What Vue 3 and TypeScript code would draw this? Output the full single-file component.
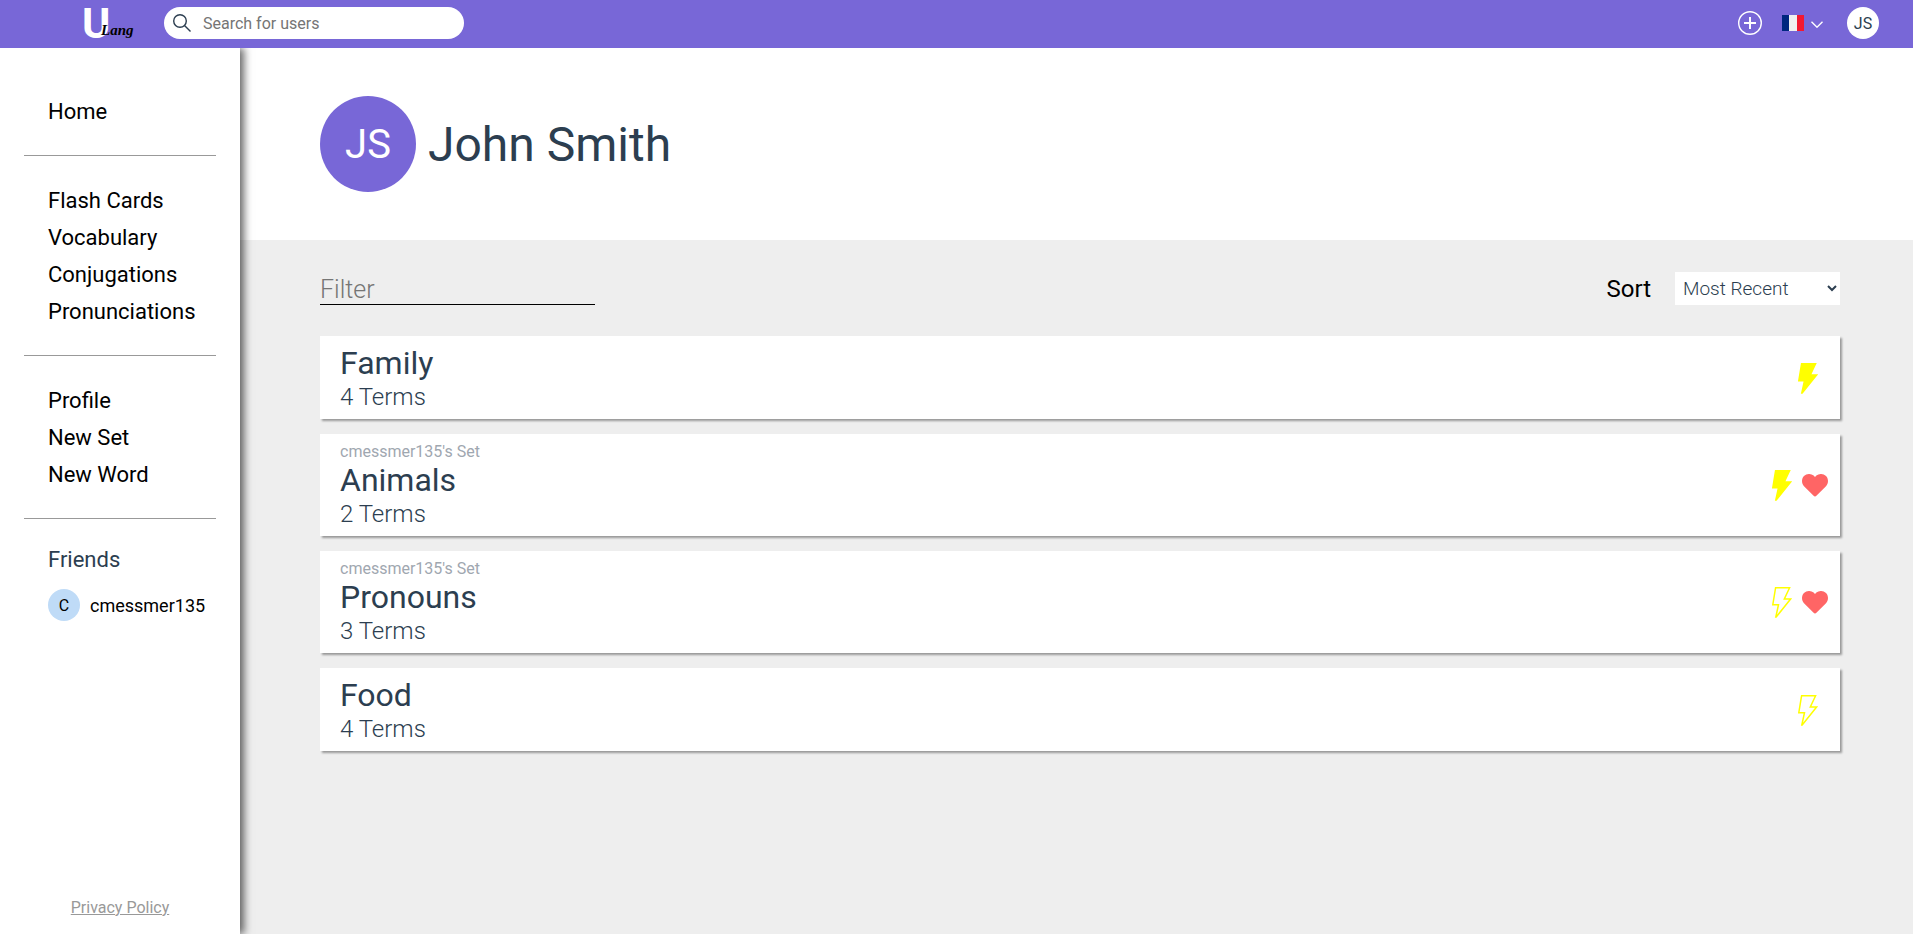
<script setup lang="ts">
import { computed, ref } from 'vue'

interface CardSet {
  id: number
  title: string
  terms: number
  owner?: string
  studied: boolean
  liked: boolean
}

const navGroups: string[][] = [
  ['Home'],
  ['Flash Cards', 'Vocabulary', 'Conjugations', 'Pronunciations'],
  ['Profile', 'New Set', 'New Word'],
]

const sets: CardSet[] = [
  { id: 1, title: 'Family', terms: 4, studied: true, liked: false },
  { id: 2, title: 'Animals', terms: 2, owner: 'cmessmer135', studied: true, liked: true },
  { id: 3, title: 'Pronouns', terms: 3, owner: 'cmessmer135', studied: false, liked: true },
  { id: 4, title: 'Food', terms: 4, studied: false, liked: false },
]

const userSearch = ref('')
const filter = ref('')
const sort = ref('recent')

const shownSets = computed(() => {
  const term = filter.value.trim().toLowerCase()
  const found = sets.filter((s) => s.title.toLowerCase().includes(term))
  return sort.value === 'name' ? found.sort((a, b) => a.title.localeCompare(b.title)) : found
})
</script>

<template>
  <div class="page">
    <header class="topbar">
      <a class="logo" href="#" aria-label="U Lang"><span class="logo-u">U</span><span class="logo-lang">Lang</span></a>
      <form class="search" role="search" @submit.prevent>
        <svg class="search-icon" viewBox="0 0 18 18" aria-hidden="true">
          <circle cx="7" cy="7" r="6.3" />
          <path d="M11.5 11.5L17.5 17.5" />
        </svg>
        <input v-model="userSearch" type="text" placeholder="Search for users" aria-label="Search for users" />
      </form>
      <div class="actions">
        <button class="icon-button" type="button" aria-label="Create">
          <svg class="plus" viewBox="0 0 24 24" aria-hidden="true">
            <circle cx="12" cy="12" r="11.3" />
            <path d="M12 6v12M6 12h12" />
          </svg>
        </button>
        <button class="icon-button language" type="button" aria-label="Language: French">
          <svg class="flag" viewBox="0 0 22 16" aria-hidden="true">
            <rect width="22" height="16" fill="#f0f0f0" />
            <rect width="7" height="16" fill="#00267f" />
            <rect x="15" width="7" height="16" fill="#f31830" />
          </svg>
          <svg class="chevron" viewBox="0 0 12 7" aria-hidden="true"><path d="M.5 .7L6 6.2L11.5 .7" /></svg>
        </button>
        <button class="avatar avatar-user" type="button" aria-label="Account of JS">JS</button>
      </div>
    </header>

    <div class="body">
      <aside class="sidebar">
        <nav aria-label="Main">
          <template v-for="(group, i) in navGroups" :key="i">
            <ul class="nav-group">
              <li v-for="item in group" :key="item"><a href="#">{{ item }}</a></li>
            </ul>
            <hr />
          </template>
        </nav>
        <section class="friends">
          <h2>Friends</h2>
          <a class="friend" href="#"><span class="avatar avatar-friend">C</span><span>cmessmer135</span></a>
        </section>
        <a class="privacy" href="#">Privacy Policy</a>
      </aside>

      <main class="content">
        <section class="profile">
          <div class="avatar-large">JS</div>
          <h1>John Smith</h1>
        </section>

        <section class="sets">
          <div class="controls">
            <input v-model="filter" class="filter" type="text" placeholder="Filter" aria-label="Filter" />
            <div class="sort">
              <label for="sort">Sort</label>
              <select id="sort" v-model="sort">
                <option value="recent">Most Recent</option>
                <option value="name">Name</option>
              </select>
            </div>
          </div>

          <ul class="cards">
            <li v-for="set in shownSets" :key="set.id" class="card">
              <div class="card-text">
                <p v-if="set.owner" class="owner">{{ set.owner }}'s Set</p>
                <h3>{{ set.title }}</h3>
                <p class="terms">{{ set.terms }} Terms</p>
              </div>
              <svg class="bolt" :class="{ filled: set.studied }" viewBox="0 0 20 31" aria-hidden="true">
                <path d="M3.6 .7H17.6L12.3 12H18.6L4.2 30H3.8L6.5 17.7H.8Z" />
              </svg>
              <svg v-if="set.liked" class="heart" viewBox="0 0 26 23" aria-hidden="true">
                <path d="M13 22.5c-.6 0-1-.3-1.4-.7L2 12.2C-.7 9.4-.6 4.7 2 2C4.7-.6 9-.6 11.6 1.6L13 2.9L14.4 1.6C17-.6 21.3-.6 24 2C26.6 4.7 26.7 9.4 24 12.2L14.4 21.8c-.4.4-.8.7-1.4.7Z" />
              </svg>
            </li>
          </ul>
        </section>
      </main>
    </div>
  </div>
</template>

<style>
body {
  margin: 0;
}
</style>

<style scoped>
.page {
  display: flex;
  flex-direction: column;
  min-height: 100vh;
  font-family: Roboto, sans-serif;
  font-size: 16px;
  color: #2c3e50;
}

.page *,
.page {
  box-sizing: border-box;
}

h1,
h2,
h3,
p,
ul {
  margin: 0;
  padding: 0;
  font-weight: 400;
  list-style: none;
}

a {
  color: #000;
  text-decoration: none;
}

input,
select,
button {
  font: inherit;
  color: inherit;
  border: 0;
}

input:focus {
  outline: none;
}

svg {
  display: block;
  flex: none;
}

.topbar {
  position: relative;
  z-index: 2;
  display: flex;
  align-items: center;
  height: 48px;
  padding: 0 34px 2px 82px;
  background: #7867d7;
}

.logo {
  position: relative;
  width: 82px;
  height: 46px;
}

.logo-u {
  display: block;
  font-size: 43px;
  line-height: 46px;
  font-weight: 700;
  color: #fff;
}

.logo-lang {
  position: absolute;
  left: 19px;
  top: 20px;
  font-family: "Liberation Serif", serif;
  font-size: 15px;
  line-height: 20px;
  font-weight: 700;
  font-style: italic;
}

.search {
  display: flex;
  align-items: center;
  width: 300px;
  height: 32px;
  padding: 0 16px 0 9px;
  gap: 12px;
  border-radius: 16px;
  background: #fff;
}

.search input {
  flex: 1;
  min-width: 0;
  padding: 0;
  background: none;
}

.search-icon {
  width: 18px;
  height: 18px;
  fill: none;
  stroke: #2c3e50;
  stroke-width: 1.4;
}

input::placeholder {
  color: #757575;
}

.actions {
  display: flex;
  align-items: center;
  margin-left: auto;
}

.icon-button {
  display: flex;
  align-items: center;
  padding: 0;
  background: none;
  cursor: pointer;
}

.plus {
  width: 24px;
  height: 24px;
  fill: none;
  stroke: #fff;
  stroke-width: 1.4;
}

.plus path {
  stroke-width: 2;
}

.language {
  gap: 7px;
  margin: 0 24px 0 20px;
}

.flag {
  width: 22px;
  height: 16px;
}

.chevron {
  width: 12px;
  height: 7px;
  margin-top: 3px;
  fill: none;
  stroke: #fff;
  stroke-width: 1.4;
}

.avatar {
  display: flex;
  align-items: center;
  justify-content: center;
  width: 32px;
  height: 32px;
  padding: 0;
  border-radius: 50%;
}

.avatar-user {
  background: #fff;
}

.avatar-friend {
  background: #bfdbf7;
  font-size: 16px;
}

.body {
  display: flex;
  flex: 1;
}

.sidebar {
  position: relative;
  z-index: 1;
  display: flex;
  flex-direction: column;
  flex: none;
  width: 240px;
  padding: 19px 24px 16px;
  background: #fff;
  box-shadow: 4px 0 8px rgba(0, 0, 0, 0.6);
}

.nav-group {
  padding: 26px 0 25px 24px;
  font-size: 22px;
  line-height: 37px;
}

hr {
  width: 100%;
  margin: 0;
  border: 0;
  border-top: 1px solid #999;
}

.friends {
  padding: 27px 0 0 24px;
}

.friends h2 {
  font-size: 22px;
  line-height: 28px;
}

.friend {
  display: flex;
  align-items: center;
  gap: 10px;
  margin-top: 15px;
  font-size: 18px;
}

.privacy {
  align-self: center;
  margin-top: auto;
  line-height: 20px;
  color: #999;
  text-decoration: underline;
}

.content {
  display: flex;
  flex-direction: column;
  flex: 1;
  min-width: 0;
}

.profile {
  display: flex;
  align-items: center;
  gap: 12px;
  padding: 48px 80px;
}

.avatar-large {
  display: flex;
  align-items: center;
  justify-content: center;
  width: 96px;
  height: 96px;
  border-radius: 50%;
  background: #7867d7;
  font-size: 40px;
  color: #fff;
}

h1 {
  padding-top: 2px;
  font-size: 48px;
  line-height: 56px;
}

.sets {
  flex: 1;
  padding: 32px 73px 32px 80px;
  background: #eee;
}

.controls {
  display: flex;
  align-items: center;
  justify-content: space-between;
}

.filter {
  width: 275px;
  height: 32px;
  padding: 2px 0 0;
  border-bottom: 1px solid #000;
  background: none;
  font-size: 25px;
  font-weight: 300;
}

.sort {
  display: flex;
  align-items: center;
  gap: 24px;
  font-size: 24px;
  color: #000;
}

select {
  width: 165px;
  height: 33px;
  padding: 0 4px;
  border-radius: 0;
  background: #fff;
  font-size: 19px;
  font-weight: 300;
  color: #2c3e50;
}

.cards {
  display: flex;
  flex-direction: column;
  gap: 15px;
  margin-top: 31px;
}

.card {
  display: flex;
  align-items: center;
  padding: 8px 12px 7px 20px;
  background: #fff;
  box-shadow: 2px 2px 2px #999;
}

.card-text {
  flex: 1;
}

.owner {
  line-height: 19px;
  color: #9fa7b0;
}

h3 {
  font-size: 32px;
  line-height: 39px;
}

.terms {
  font-size: 24px;
  line-height: 29px;
  font-weight: 300;
}

.bolt {
  width: 20px;
  height: 31px;
  margin-right: 10px;
  fill: none;
  stroke: #ff0;
  stroke-width: 1.5;
}

.bolt.filled {
  fill: #ff0;
}

.heart {
  width: 26px;
  height: 23px;
  fill: #ff6565;
}
</style>
